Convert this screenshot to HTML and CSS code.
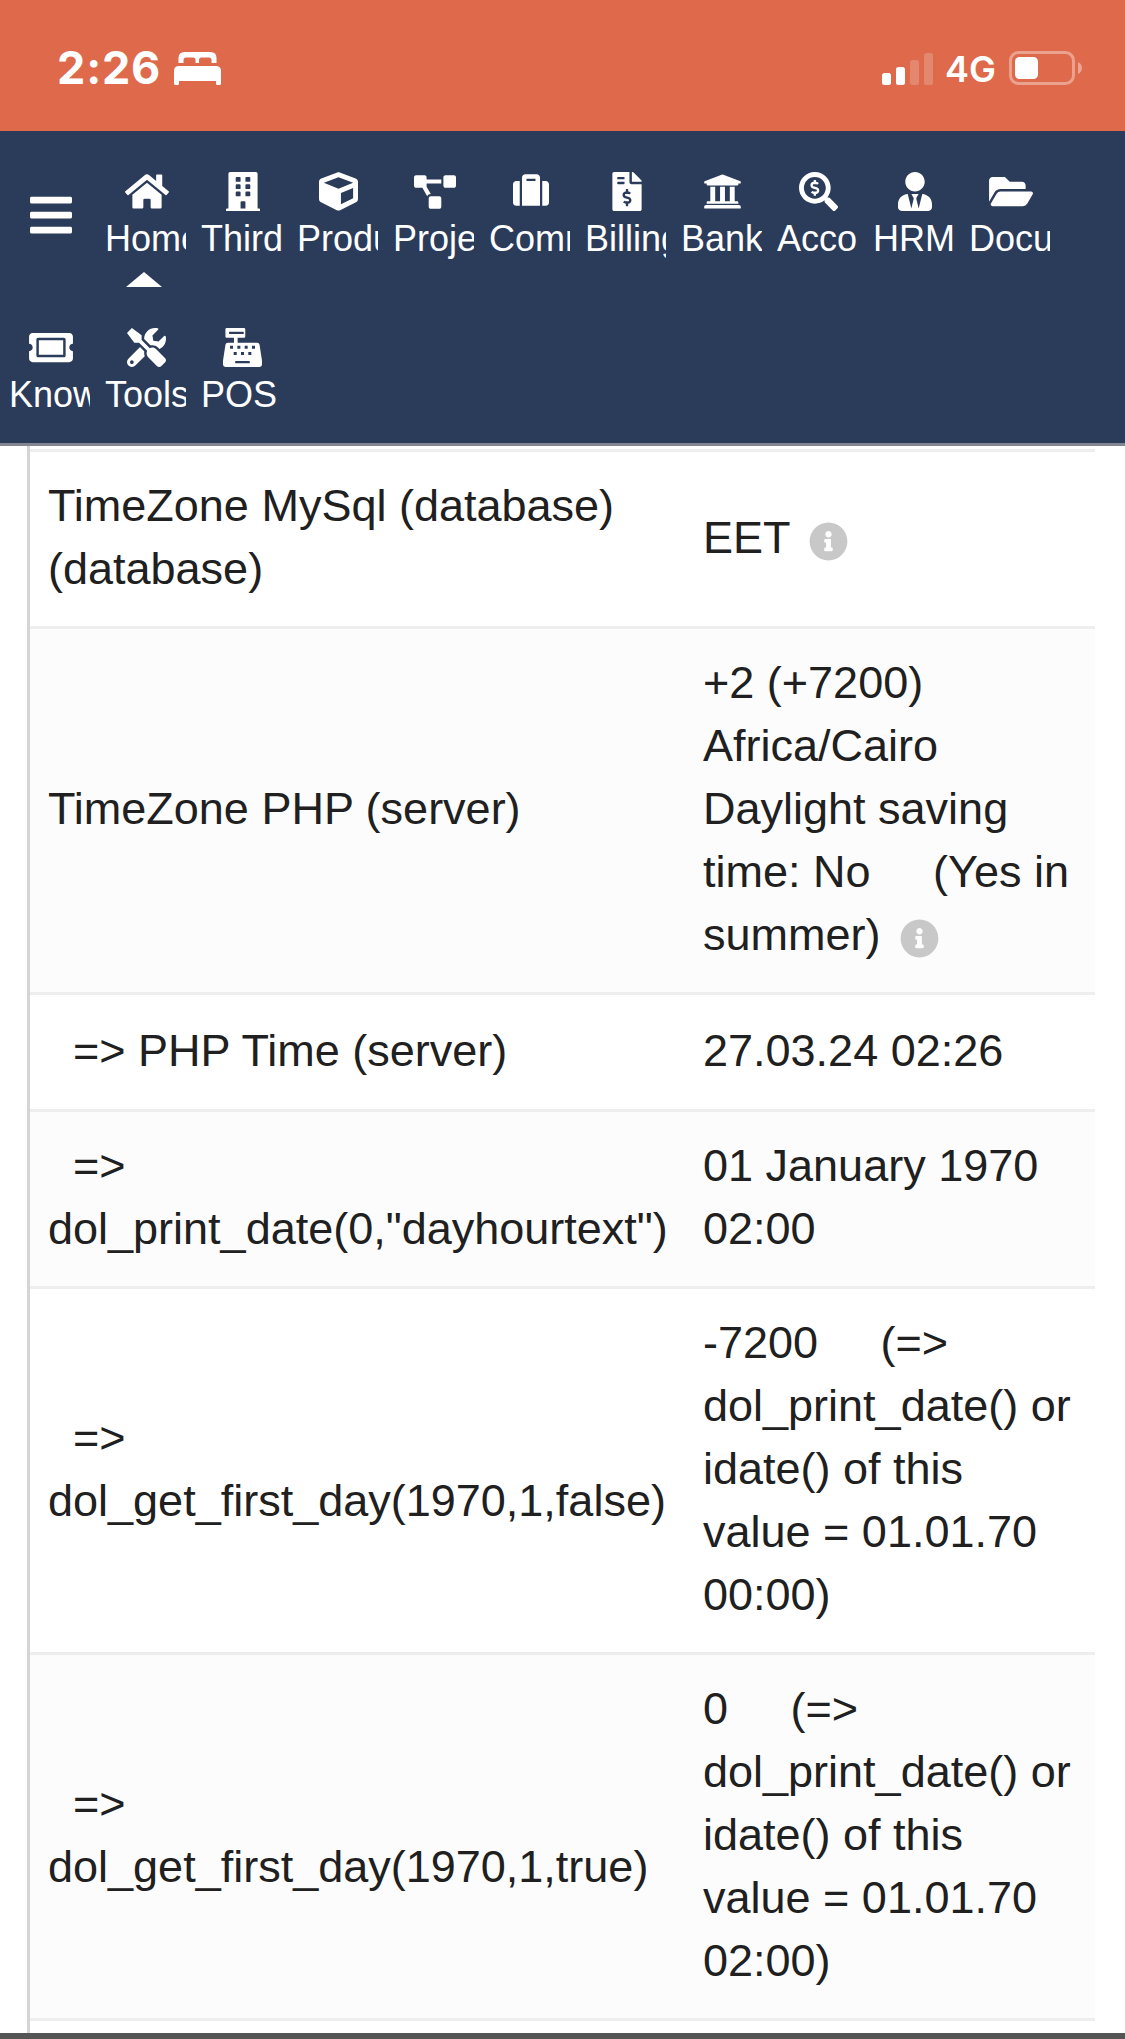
FILE: index.html
```html
<!DOCTYPE html>
<html lang="en">
<head>
  <meta charset="UTF-8" />
  <meta name="viewport" content="width=device-width, initial-scale=1.0" />
  <title>System information - Date and time</title>
  <link rel="stylesheet" href="styles.css">
</head>
<body>
  <header class="statusbar">
    <div class="status-left">
      <span class="clock">2:26</span>
      <svg class="bed" viewBox="0 0 47 33"><path d="M4.500 11V6Q4.500 0 10.500 0H36.500Q42.500 0 42.500 6V11H37.500V8Q37.500 5.500 35 5.500H27.500Q25 5.500 25 8V11H21.500V8Q21.500 5.500 19 5.500H12Q9.500 5.500 9.500 8V11ZM5 14H42Q47 14 47 19V31.500Q47 33 45.500 33H43.500Q42 33 42 31.500V29H5V31.500Q5 33 3.500 33H1.500Q0 33 0 31.500V19Q0 14 5 14Z"/></svg>
    </div>
    <div class="status-right">
      <svg class="signal" viewBox="0 0 51 33">
        <rect x="0" y="21" width="9" height="12" rx="2.500"/>
        <rect x="14" y="15" width="9" height="18" rx="2.500"/>
        <rect class="off" x="28" y="8" width="9" height="25" rx="2.500"/>
        <rect class="off" x="42" y="1" width="9" height="32" rx="2.500"/>
      </svg>
      <span class="network">4G</span>
      <svg class="battery" viewBox="0 0 74 34">
        <rect class="outline" x="1.500" y="1.500" width="63" height="31" rx="8"/>
        <rect x="6" y="6" width="23" height="22" rx="4.500"/>
        <path class="cap" d="M69 11Q73 13 73 17T69 23Z"/>
      </svg>
    </div>
  </header>

  <nav class="topmenu">
    <a class="item burger">
      <svg width="42" height="48" viewBox="0 0 448 512"><path d="M16 132h416c8.837 0 16-7.163 16-16V76c0-8.837-7.163-16-16-16H16C7.163 60 0 67.163 0 76v40c0 8.837 7.163 16 16 16zm0 160h416c8.837 0 16-7.163 16-16v-40c0-8.837-7.163-16-16-16H16c-8.837 0-16 7.163-16 16v40c0 8.837 7.163 16 16 16zm0 160h416c8.837 0 16-7.163 16-16v-40c0-8.837-7.163-16-16-16H16c-8.837 0-16 7.163-16 16v40c0 8.837 7.163 16 16 16z"/></svg>
    </a>
    <a class="item active">
      <span class="icon"><svg width="44" height="39" viewBox="0 0 576 512"><path d="M280.370 148.260L96 300.110V464a16 16 0 0 0 16 16l112.060-.29a16 16 0 0 0 15.920-16V368a16 16 0 0 1 16-16h64a16 16 0 0 1 16 16v95.640a16 16 0 0 0 16 16.050L464 480a16 16 0 0 0 16-16V300L295.670 148.260a12.190 12.190 0 0 0-15.300 0zM571.600 251.470L488 182.560V44.050a12 12 0 0 0-12-12h-56a12 12 0 0 0-12 12v72.610L318.470 43a48 48 0 0 0-61 0L4.340 251.470a12 12 0 0 0-1.600 16.900l25.500 31A12 12 0 0 0 45.150 301l235.220-193.740a12.190 12.190 0 0 1 15.300 0L530.900 301a12 12 0 0 0 16.900-1.600l25.500-31a12 12 0 0 0-1.700-16.930z"/></svg></span>
      <span class="label">Home</span>
    </a>
    <a class="item">
      <span class="icon"><svg width="34" height="39" viewBox="0 0 448 512"><path fill-rule="evenodd" d="M436 480h-20V24c0-13.255-10.745-24-24-24H56C42.745 0 32 10.745 32 24v456H12c-6.627 0-12 5.373-12 12v20h448v-20c0-6.627-5.373-12-12-12zM140 64h40q12 0 12 12v40q0 12-12 12h-40q-12 0-12-12V76q0-12 12-12zM268 64h40q12 0 12 12v40q0 12-12 12h-40q-12 0-12-12V76q0-12 12-12zM140 160h40q12 0 12 12v40q0 12-12 12h-40q-12 0-12-12v-40q0-12 12-12zM268 160h40q12 0 12 12v40q0 12-12 12h-40q-12 0-12-12v-40q0-12 12-12zM140 256h40q12 0 12 12v40q0 12-12 12h-40q-12 0-12-12v-40q0-12 12-12zM268 256h40q12 0 12 12v40q0 12-12 12h-40q-12 0-12-12v-40q0-12 12-12zM204 384h40q12 0 12 12v84h-64v-84q0-12 12-12z"/></svg></span>
      <span class="label">Third</span>
    </a>
    <a class="item">
      <span class="icon"><svg width="39" height="39" viewBox="0 0 512 512"><path d="M239.100 6.300l-208 78c-18.700 7-31.100 25-31.100 45v225.100c0 18.200 10.300 34.800 26.500 42.900l208 104c13.500 6.800 29.400 6.800 42.900 0l208-104c16.300-8.100 26.500-24.800 26.500-42.900V129.300c0-20-12.400-37.900-31.100-44.900l-208-78C262 2.200 250 2.200 239.100 6.300zM256 68.400l192 72v1.100l-192 78-192-78v-1.100l192-72zm32 356V275.500l160-65v133.900l-160 80z"/></svg></span>
      <span class="label">Products</span>
    </a>
    <a class="item">
      <span class="icon"><svg width="42" height="34" viewBox="0 0 640 512"><path d="M384 320H256c-17.670 0-32 14.330-32 32v128c0 17.670 14.330 32 32 32h128c17.670 0 32-14.330 32-32V352c0-17.670-14.330-32-32-32zM192 32c0-17.670-14.330-32-32-32H32C14.330 0 0 14.330 0 32v128c0 17.670 14.330 32 32 32h95.720l73.160 128.040C211.980 300.980 232.400 288 256 288h.28L192 175.510V128h224V64H192V32zM608 0H480c-17.670 0-32 14.330-32 32v128c0 17.670 14.330 32 32 32h128c17.670 0 32-14.330 32-32V32c0-17.670-14.330-32-32-32z"/></svg></span>
      <span class="label">Projects</span>
    </a>
    <a class="item">
      <span class="icon raised"><svg width="36" height="36" viewBox="0 0 512 512"><path d="M128 480h256V80c0-26.500-21.500-48-48-48H176c-26.500 0-48 21.500-48 48v400zm64-384h128v32H192V96zm320 80v256c0 26.500-21.500 48-48 48h-48V128h48c26.500 0 48 21.500 48 48zM96 480H48c-26.500 0-48-21.500-48-48V176c0-26.500 21.500-48 48-48h48v352z"/></svg></span>
      <span class="label">Commerce</span>
    </a>
    <a class="item">
      <span class="icon"><svg width="30" height="39" viewBox="0 0 384 512"><path d="M377 105L279.100 7c-4.500-4.500-10.600-7-17-7H256v128h128v-6.100c0-6.300-2.500-12.400-7-16.900zm-153 31V0H24C10.700 0 0 10.700 0 24v464c0 13.300 10.700 24 24 24h336c13.300 0 24-10.700 24-24V160H248c-13.200 0-24-10.800-24-24zM64 72c0-4.420 3.580-8 8-8h80c4.420 0 8 3.580 8 8v16c0 4.420-3.580 8-8 8H72c-4.420 0-8-3.580-8-8V72zm0 80v-16c0-4.420 3.580-8 8-8h80c4.420 0 8 3.580 8 8v16c0 4.420-3.580 8-8 8H72c-4.420 0-8-3.580-8-8zm144 263.880V440c0 4.420-3.580 8-8 8h-16c-4.420 0-8-3.580-8-8v-24.290c-11.290-.58-22.270-4.520-31.370-11.350-3.900-2.930-4.100-8.770-.57-12.140l11.750-11.210c2.770-2.640 6.890-2.760 10.130-.73 3.870 2.420 8.260 3.720 12.820 3.720h28.110c6.500 0 11.800-5.920 11.800-13.190 0-5.950-3.610-11.190-8.770-12.730l-45-13.500c-18.590-5.580-31.580-23.420-31.580-43.390 0-24.520 19.050-44.440 42.670-45.070V232c0-4.420 3.580-8 8-8h16c4.420 0 8 3.580 8 8v24.290c11.290.58 22.270 4.510 31.370 11.350 3.900 2.930 4.100 8.770.57 12.140l-11.750 11.210c-2.770 2.640-6.890 2.760-10.130.73-3.870-2.430-8.260-3.720-12.820-3.720h-28.110c-6.500 0-11.800 5.920-11.800 13.190 0 5.950 3.610 11.190 8.770 12.730l45 13.500c18.590 5.580 31.580 23.420 31.580 43.390 0 24.530-19.050 44.440-42.670 45.070z"/></svg></span>
      <span class="label">Billing</span>
    </a>
    <a class="item">
      <span class="icon"><svg width="39" height="39" viewBox="0 0 512 512"><path d="M496 128v16a8 8 0 0 1-8 8h-24v12c0 6.627-5.373 12-12 12H60c-6.627 0-12-5.373-12-12v-12H24a8 8 0 0 1-8-8v-16a8 8 0 0 1 4.941-7.392l232-88a7.996 7.996 0 0 1 6.118 0l232 88A8 8 0 0 1 496 128zm-24 304H40c-13.255 0-24 10.745-24 24v16a8 8 0 0 0 8 8h464a8 8 0 0 0 8-8v-16c0-13.255-10.745-24-24-24zM96 192v192H60c-6.627 0-12 5.373-12 12v20h416v-20c0-6.627-5.373-12-12-12h-36V192h-64v192h-64V192h-64v192h-64V192H96z"/></svg></span>
      <span class="label">Bank</span>
    </a>
    <a class="item">
      <span class="icon"><svg width="39" height="39" viewBox="0 0 512 512"><path d="M505.040 442.660l-99.710-99.690c-4.500-4.500-10.600-7-17-7h-16.300c27.600-35.300 44-79.690 44-127.990C416.030 93.090 322.920 0 208.020 0S0 93.090 0 207.980s93.110 207.980 208.020 207.980c48.300 0 92.710-16.400 128.010-44v16.300c0 6.400 2.500 12.500 7 17l99.710 99.690c9.400 9.400 24.600 9.400 33.900 0l28.300-28.300c9.400-9.400 9.400-24.590.1-33.990zm-297.020-90.700c-79.540 0-144-64.340-144-143.980 0-79.530 64.350-143.980 144-143.980 79.540 0 144 64.340 144 143.980 0 79.530-64.350 143.980-144 143.980zm27.110-152.540l-45.010-13.500c-5.160-1.550-8.770-6.780-8.770-12.730 0-7.270 5.300-13.190 11.800-13.190h28.100c4.560 0 8.960 1.290 12.820 3.720 3.240 2.030 7.360 1.910 10.130-.73l11.750-11.210c3.530-3.370 3.330-9.210-.57-12.140-9.100-6.830-20.080-10.770-31.370-11.350V112c0-4.420-3.580-8-8-8h-16c-4.420 0-8 3.580-8 8v16.120c-23.630.63-42.680 20.550-42.680 45.070 0 19.970 12.990 37.810 31.580 43.390l45.010 13.500c5.160 1.550 8.770 6.780 8.770 12.730 0 7.270-5.300 13.190-11.800 13.190h-28.110c-4.560 0-8.960-1.290-12.820-3.720-3.240-2.030-7.360-1.910-10.130.73l-11.750 11.210c-3.530 3.370-3.330 9.210.57 12.140 9.100 6.830 20.080 10.770 31.370 11.350V304c0 4.420 3.580 8 8 8h16c4.420 0 8-3.580 8-8v-16.120c23.630-.63 42.680-20.540 42.680-45.070 0-19.970-12.990-37.810-31.590-43.390z"/></svg></span>
      <span class="label">Acco</span>
    </a>
    <a class="item">
      <span class="icon"><svg width="34" height="39" viewBox="0 0 448 512"><path d="M224 256c70.700 0 128-57.300 128-128S294.700 0 224 0 96 57.300 96 128s57.300 128 128 128zm95.800 32.600L272 480l-32-136 32-56h-96l32 56-32 136-47.800-191.400C56.900 292 0 350.300 0 422.400V464c0 26.500 21.500 48 48 48h352c26.500 0 48-21.500 48-48v-41.600c0-72.100-56.900-130.400-128.200-133.800z"/></svg></span>
      <span class="label">HRM</span>
    </a>
    <a class="item">
      <span class="icon"><svg width="44" height="39" viewBox="0 0 576 512"><path d="M572.694 292.093L500.270 416.248A63.997 63.997 0 0 1 444.989 448H45.025c-18.523 0-30.064-20.093-20.731-36.093l72.424-124.155A64 64 0 0 1 152 256h399.964c18.523 0 30.064 20.093 20.730 36.093zM152 224h328v-48c0-26.510-21.490-48-48-48H272l-64-64H48C21.490 64 0 85.490 0 112v278.046l69.077-118.418C86.214 242.250 117.989 224 152 224z"/></svg></span>
      <span class="label">Docu</span>
    </a>
    <a class="item">
      <span class="icon"><svg width="44" height="39" viewBox="0 0 576 512"><path d="M128 160h320v192H128V160zm400 96c0 26.510 21.490 48 48 48v96c0 26.510-21.490 48-48 48H48c-26.510 0-48-21.490-48-48v-96c26.510 0 48-21.490 48-48s-21.490-48-48-48v-96c0-26.510 21.490-48 48-48h480c26.510 0 48 21.490 48 48v96c-26.510 0-48 21.490-48 48zm-48-104c0-13.255-10.745-24-24-24H120c-13.255 0-24 10.745-24 24v208c0 13.255 10.745 24 24 24h336c13.255 0 24-10.745 24-24V152z"/></svg></span>
      <span class="label">Knowledge</span>
    </a>
    <a class="item">
      <span class="icon"><svg width="39" height="39" viewBox="0 0 512 512"><path d="M501.100 395.700L384 278.600c-23.100-23.100-57.600-27.600-85.400-13.900L192 158.100V96L64 0 0 64l96 128h62.100l106.600 106.600c-13.600 27.800-9.200 62.300 13.900 85.400l117.100 117.100c14.600 14.600 38.200 14.600 52.700 0l52.700-52.700c14.500-14.600 14.500-38.200 0-52.700zM331.700 225c28.300 0 54.900 11 74.900 31l19.400 19.400c15.800-6.900 30.800-16.500 43.800-29.500 37.100-37.100 49.700-89.300 37.900-136.700-2.200-9-13.500-12.100-20.100-5.500l-74.400 74.400-67.900-11.300L334 98.900l74.400-74.400c6.600-6.600 3.400-17.900-5.700-20.200-47.400-11.700-99.600.9-136.600 37.900-28.500 28.500-41.900 66.100-41.200 103.600l82.100 82.100c8.100-1.900 16.500-2.900 24.700-2.900zm-103.900 82l-56.700-56.700L18.700 402.800c-25 25-25 65.500 0 90.500s65.500 25 90.500 0l123.600-123.600c-7.600-19.900-9.900-41.600-5-62.700zM64 472c-13.200 0-24-10.800-24-24 0-13.300 10.700-24 24-24s24 10.700 24 24c0 13.200-10.700 24-24 24z"/></svg></span>
      <span class="label">Tools</span>
    </a>
    <a class="item">
      <span class="icon"><svg width="39" height="39" viewBox="0 0 512 512"><path fill-rule="evenodd" d="M48 0H276Q292 0 292 16V112Q292 128 276 128H192V192H448Q476 192 480 220L510 416Q512 430 512 440V480Q512 512 480 512H32Q0 512 0 480V440Q0 430 2 416L32 220Q36 192 64 192H144V128H48Q32 128 32 112V16Q32 0 48 0ZM80 48V80H272V48ZM92 234H132V274H92ZM188 234H228V274H188ZM284 234H324V274H284ZM380 234H420V274H380ZM140 314H180V354H140ZM236 314H276V354H236ZM332 314H372V354H332ZM168 432Q160 432 160 440V456Q160 464 168 464H344Q352 464 352 456V440Q352 432 344 432Z" transform="translate(0 0)"/></svg></span>
      <span class="label">POS</span>
    </a>
  </nav>

  <main class="content">
    <table class="infos">
      <tr>
        <td>TimeZone MySql (database)<br />(database)</td>
        <td>EET <svg class="info" viewBox="0 0 512 512"><path d="M256 8C119.043 8 8 119.083 8 256c0 136.997 111.043 248 248 248s248-111.003 248-248C504 119.083 392.957 8 256 8zm0 110c23.196 0 42 18.804 42 42s-18.804 42-42 42-42-18.804-42-42 18.804-42 42-42zm56 254c0 6.627-5.373 12-12 12h-88c-6.627 0-12-5.373-12-12v-24c0-6.627 5.373-12 12-12h12v-64h-12c-6.627 0-12-5.373-12-12v-24c0-6.627 5.373-12 12-12h64c6.627 0 12 5.373 12 12v100h12c6.627 0 12 5.373 12 12v24z"/></svg></td>
      </tr>
      <tr>
        <td>TimeZone PHP (server)</td>
        <td>+2 (+7200)<br />Africa/Cairo<br />Daylight saving<br />time: No &nbsp; &nbsp; (Yes in<br />summer) <svg class="info" viewBox="0 0 512 512"><path d="M256 8C119.043 8 8 119.083 8 256c0 136.997 111.043 248 248 248s248-111.003 248-248C504 119.083 392.957 8 256 8zm0 110c23.196 0 42 18.804 42 42s-18.804 42-42 42-42-18.804-42-42 18.804-42 42-42zm56 254c0 6.627-5.373 12-12 12h-88c-6.627 0-12-5.373-12-12v-24c0-6.627 5.373-12 12-12h12v-64h-12c-6.627 0-12-5.373-12-12v-24c0-6.627 5.373-12 12-12h64c6.627 0 12 5.373 12 12v100h12c6.627 0 12 5.373 12 12v24z"/></svg></td>
      </tr>
      <tr class="single">
        <td>&nbsp; =&gt; PHP Time (server)</td>
        <td>27.03.24 02:26</td>
      </tr>
      <tr>
        <td>&nbsp; =&gt;<br />dol_print_date(0,"dayhourtext")</td>
        <td>01 January 1970<br />02:00</td>
      </tr>
      <tr>
        <td>&nbsp; =&gt;<br />dol_get_first_day(1970,1,false)</td>
        <td>-7200 &nbsp; &nbsp; (=&gt;<br />dol_print_date() or<br />idate() of this<br />value = 01.01.70<br />00:00)</td>
      </tr>
      <tr>
        <td>&nbsp; =&gt;<br />dol_get_first_day(1970,1,true)</td>
        <td>0 &nbsp; &nbsp; (=&gt;<br />dol_print_date() or<br />idate() of this<br />value = 01.01.70<br />02:00)</td>
      </tr>
    </table>
  </main>
  <footer class="bottombar"></footer>
</body>
</html>
```
FILE: styles.css
```css
html, body {
  margin: 0;
  padding: 0;
}

body {
  display: flex;
  flex-direction: column;
  height: 2039px;
  overflow: hidden;
  font-family: "Liberation Sans", Arial, sans-serif;
  background: #fff;
  color: #202020;
}

svg {
  display: block;
  fill: currentColor;
}

/* phone status bar */
.statusbar {
  display: flex;
  justify-content: space-between;
  box-sizing: border-box;
  height: 131px;
  flex-shrink: 0;
  padding: 51px 42px 0 57px;
  background: #de694b;
  color: #fff;
  font-family: Inter, sans-serif;
}

.status-left,
.status-right {
  display: flex;
  height: 34px;
  align-items: center;
}

.clock {
  width: 117px;
  font-size: 45px;
  font-weight: 700;
  letter-spacing: 0.8px;
  line-height: 34px;
}

.bed {
  width: 47px;
  height: 33px;
}

.signal {
  width: 51px;
  height: 33px;
}

.signal .off {
  opacity: 0.2;
}

.network {
  width: 63px;
  padding-left: 12px;
  font-size: 36px;
  font-weight: 600;
  line-height: 36px;
  padding-top: 2px;
  margin-right: 1px;
}

.battery {
  width: 74px;
  height: 34px;
}

.battery .outline {
  fill: none;
  stroke: #fff;
  stroke-width: 3;
  opacity: 0.38;
}

.battery .cap {
  opacity: 0.4;
}

/* top menu */
.topmenu {
  display: flex;
  flex-wrap: wrap;
  flex-shrink: 0;
  padding-left: 3px;
  background: #2b3b5a;
  border-bottom: 3px solid #82868f;
  color: #fff;
}

.item {
  position: relative;
  box-sizing: border-box;
  width: 96px;
  height: 156px;
  padding: 41px 9px 0 6px;
}

.burger {
  padding: 60px 27px 0;
}

.icon {
  display: flex;
  align-items: center;
  justify-content: center;
  width: 83px;
  height: 39px;
}

.raised {
  height: 36px;
  padding-bottom: 3px;
}

.label {
  display: block;
  width: 81px;
  margin-top: 4px;
  overflow: hidden;
  white-space: nowrap;
  font-size: 36px;
  line-height: 48px;
}

.active::after {
  content: "";
  position: absolute;
  left: 27px;
  bottom: 0;
  border: 18px solid transparent;
  border-top: 0;
  border-bottom: 15px solid #fff;
}

/* information table */
.content {
  flex: 1;
  margin: 0 30px 0 27px;
  padding-top: 3px;
  border-left: 3px solid #d5d5d5;
}

.infos {
  width: 1065px;
  table-layout: fixed;
  border-spacing: 0;
  border-top: 3px solid #eee;
  font-size: 45px;
  line-height: 63px;
}

.infos td {
  box-sizing: border-box;
  padding: 22px 0 26px 18px;
  border-bottom: 3px solid #eee;
  vertical-align: middle;
  white-space: nowrap;
}

.infos td:first-child {
  width: 655px;
}

.infos tr:nth-child(even) {
  background: #fcfcfc;
}

.infos .single td {
  padding: 24px 0 27px 18px;
}

.info {
  display: inline-block;
  width: 39px;
  height: 39px;
  margin-left: 6.5px;
  vertical-align: -8px;
  color: #c8c8c8;
}

.bottombar {
  height: 6px;
  flex-shrink: 0;
  background: #555;
}
```
